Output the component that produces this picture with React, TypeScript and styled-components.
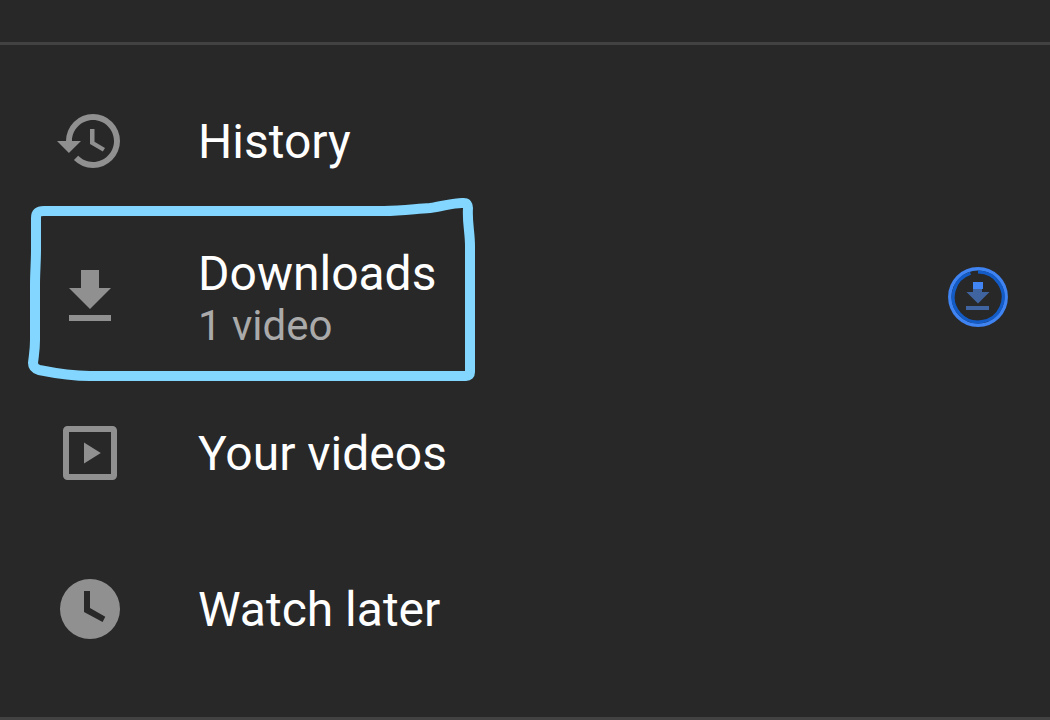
import React from "react";
import styled, { createGlobalStyle } from "styled-components";

const GlobalStyle = createGlobalStyle`
  * { box-sizing: border-box; }
  body {
    margin: 0;
    background: #282828;
    color: #ffffff;
    font-family: Roboto, "Liberation Sans", sans-serif;
  }
`;

const Page = styled.main`
  display: flex;
  flex-direction: column;
  min-height: 100vh;
  padding-top: 42px;
  overflow: hidden;
`;

const Divider = styled.hr`
  width: 100%;
  height: 3px;
  margin: 0;
  border: 0;
  background: #424242;
`;

const Menu = styled.nav`
  padding: 18px 0 30px;
`;

const List = styled.ul`
  margin: 0;
  padding: 0;
  list-style: none;
`;

const Item = styled.li`
  position: relative;
`;

const RowLink = styled.a`
  display: flex;
  align-items: center;
  min-height: 156px;
  padding: 0 42px 0 54px;
  color: inherit;
  text-decoration: none;
`;

const RowIcon = styled.svg`
  flex: none;
  width: 72px;
  height: 72px;
  margin-right: 72px;
  fill: #909090;
`;

const Labels = styled.span`
  display: flex;
  flex: 1;
  flex-direction: column;
  padding-top: 2px;
`;

const Title = styled.span`
  font-size: 48px;
  line-height: 56px;
`;

const Subtitle = styled.span`
  font-size: 42px;
  line-height: 48px;
  color: #aaaaaa;
`;

const Progress = styled.svg`
  flex: none;
  width: 60px;
  height: 60px;
`;

const Marker = styled.svg`
  position: absolute;
  top: -29px;
  left: 20px;
  width: 460px;
  height: 200px;
  pointer-events: none;
  fill: none;
  stroke: #82d6ff;
  stroke-width: 10;
  stroke-linejoin: round;
  stroke-linecap: round;
`;

const icons = {
  history:
    "M13 3a9 9 0 0 0-9 9H1l3.89 3.89.07.14L9 12H6c0-3.87 3.13-7 7-7s7 3.13 7 7-3.13 7-7 7c-1.93 0-3.68-.79-4.94-2.06l-1.42 1.42A8.954 8.954 0 0 0 13 21a9 9 0 0 0 0-18zm-1 5v5l4.28 2.54.72-1.21-3.5-2.08V8H12z",
  download: "M19 9h-4V3H9v6H5l7 7 7-7zM5 18v2h14v-2H5z",
  videos:
    "M4.5 3h15A1.5 1.5 0 0 1 21 4.5v15a1.5 1.5 0 0 1-1.5 1.5h-15A1.5 1.5 0 0 1 3 19.500v-15A1.5 1.5 0 0 1 4.5 3zM5 5v14h14V5H5zm5 3.500v7l5.600-3.500z",
  later:
    "M12 2a10 10 0 1 0 0 20 10 10 0 0 0 0-20zM10 6h2v5.700l5.100 2.900-.9 1.700L10 13z",
};

function DownloadProgress() {
  return (
    <Progress viewBox="0 0 60 60" role="img" aria-label="Downloading">
      <circle cx="30" cy="30" r="28.200" fill="none" stroke="#3f84f2" strokeWidth="3.500" />
      <path d="M30 5A25 25 0 1 1 22.500 6.200" fill="none" stroke="#135cc8" strokeWidth="3.200" />
      <path d="M34 21v4h7.500L30 36.500 18.500 25H25v-4zM18 39h23v4H18z" fill="#40649f" />
      <path d="M25 15h10v7H25z" fill="#4285f4" />
    </Progress>
  );
}

function HandDrawnBox() {
  return (
    <Marker viewBox="0 0 460 200" aria-hidden="true">
      <path d="M16 28C16 23 18 21 24 21H364C382 21 394 19 410 18C424 16 436 12 444 13Q448 13 448 18C447 32 450 42 450 56V182Q450 186 446 186H70C50 186 34 183 19 180Q13 178 13 173C14 164 15 160 15 150V95C15 82 16 72 16 60Z" />
    </Marker>
  );
}

type RowProps = {
  icon: keyof typeof icons;
  title: string;
  subtitle?: string;
  downloading?: boolean;
  marked?: boolean;
};

function Row({ icon, title, subtitle, downloading, marked }: RowProps) {
  return (
    <Item>
      <RowLink href="#">
        <RowIcon viewBox="0 0 24 24" aria-hidden="true">
          <path d={icons[icon]} fillRule="evenodd" />
        </RowIcon>
        <Labels>
          <Title>{title}</Title>
          {subtitle && <Subtitle>{subtitle}</Subtitle>}
        </Labels>
        {downloading && <DownloadProgress />}
      </RowLink>
      {marked && <HandDrawnBox />}
    </Item>
  );
}

export default function App() {
  return (
    <>
      <GlobalStyle />
      <Page>
        <Divider />
        <Menu aria-label="Library">
          <List>
            <Row icon="history" title="History" />
            <Row icon="download" title="Downloads" subtitle="1 video" downloading marked />
            <Row icon="videos" title="Your videos" />
            <Row icon="later" title="Watch later" />
          </List>
        </Menu>
        <Divider />
      </Page>
    </>
  );
}
